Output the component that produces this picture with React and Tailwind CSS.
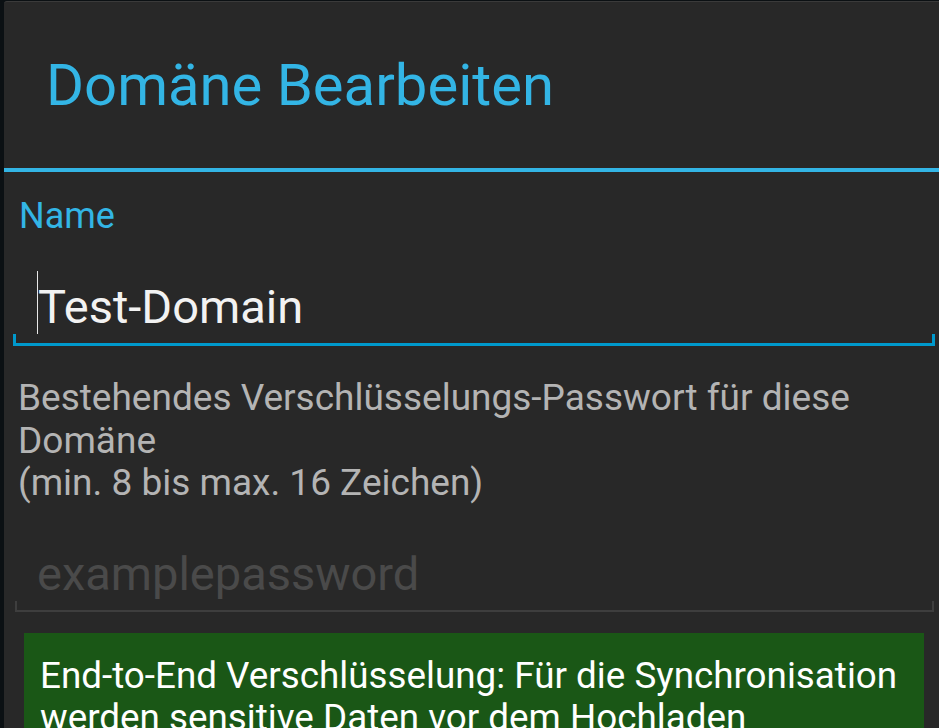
import React from 'react';

const FONT = { fontFamily: 'Roboto, "Noto Sans", sans-serif' };

function Field({ value, placeholder, focused }) {
  const tone = focused ? 'border-[#0099cc] border-x-[3px] border-b-[3px] h-[12px]' : 'border-[#3e3e3e] border-x-2 border-b-2 h-[11px]';
  return (
    <div className={focused ? 'ml-[9px] mr-[4px]' : 'ml-[11px] mr-[5px]'}>
      <div className={`flex items-end ${focused ? 'pl-[24px]' : 'pl-[22px]'}`}>
        {focused && <span className="h-[63px] w-px bg-[#e8e8e8]" />}
        <span className={`text-[47px] leading-[54px] ${value ? 'text-[#f2f2f2]' : 'text-[#4a4a4a]'}`}>
          {value || placeholder}
        </span>
      </div>
      <div className={tone} />
    </div>
  );
}

export default function App() {
  return (
    <div className="flex h-[728px] w-full overflow-hidden bg-[#0b1013] pl-[4px] pt-px" style={FONT}>
      <div className="flex-1 rounded-tl-[3px] border-t border-[#3a3a3a] bg-[#282828]">
        <div className="flex h-[166px] items-center pl-[42px]">
          <h1 className="text-[58px] leading-none text-[#33b5e5]">Domäne Bearbeiten</h1>
        </div>
        <div className="h-[4px] bg-[#33b5e5]" />

        <div className="pt-[23px]">
          <p className="pl-[15px] text-[36px] leading-[42px] text-[#33b5e5]">Name</p>
          <div className="mt-[34px]">
            <Field value="Test-Domain" focused />
          </div>

          <p className="mt-[31px] pl-[14px] pr-[4px] text-[37px] leading-[42.5px] text-[#b4b4b4]">
            Bestehendes Verschlüsselungs-Passwort für diese Domäne
            <br />
            (min. 8 bis max. 16 Zeichen)
          </p>

          <div className="mt-[42px]">
            <Field placeholder="examplepassword" />
          </div>

          <div className="ml-[20px] mr-[15px] mt-[21px] bg-[#1a5716] px-[16px] pb-[20px] pt-[22px]">
            <p className="text-[36.8px] leading-[42.5px] text-white">
              End-to-End Verschlüsselung: Für die Synchronisation werden sensitive Daten vor dem Hochladen
              verschlüsselt.
            </p>
          </div>
        </div>
      </div>
    </div>
  );
}
